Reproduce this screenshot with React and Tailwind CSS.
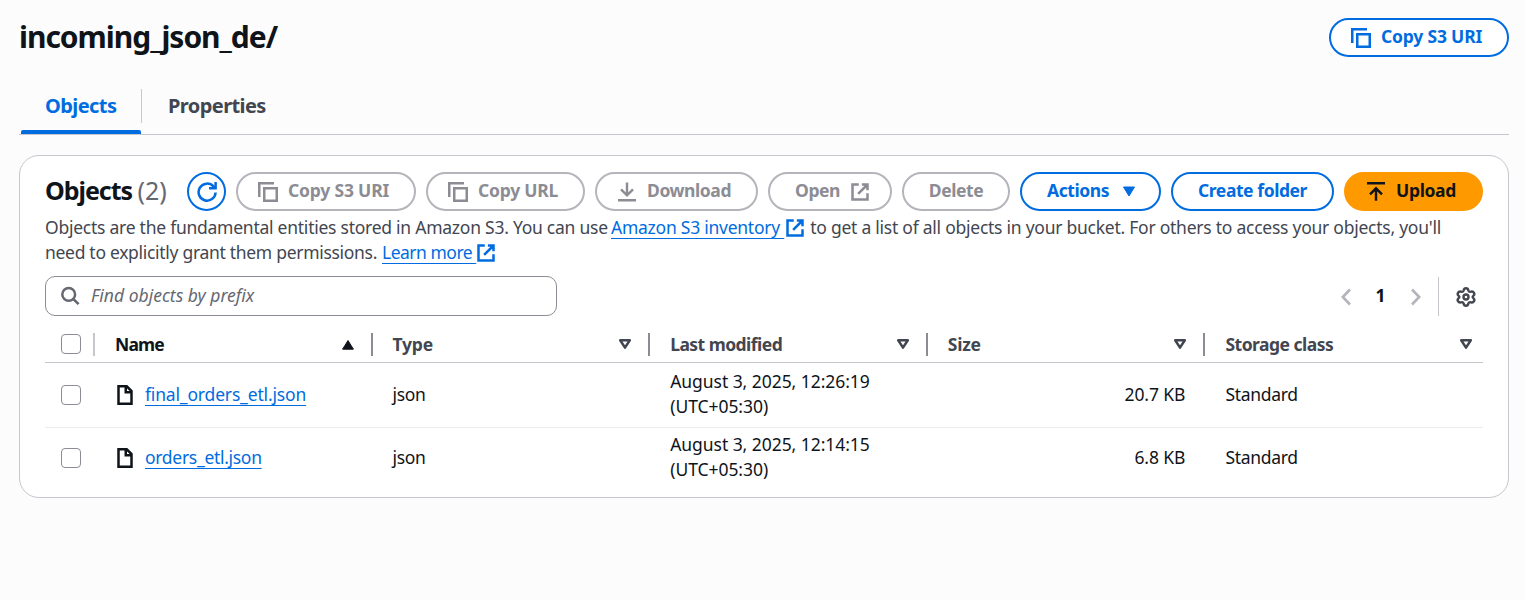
const iconBase = "shrink-0 fill-none stroke-current stroke-2";

function CopyIcon() {
  return (
    <svg viewBox="0 0 20 20" className="h-5 w-5 shrink-0 fill-none stroke-current">
      <path d="M1.25 15V1.25H16" strokeWidth="2.5" />
      <path d="M6.25 6.25h12.5v12.5H6.25z" strokeWidth="2.5" />
    </svg>
  );
}

function ExternalIcon() {
  return (
    <svg viewBox="0 0 16 16" className={`${iconBase} h-5 w-5`}>
      <path d="M14 9.050V14H2V2h5M9.500 2H14v4.500M6.500 9.500L14 2" />
    </svg>
  );
}

function RefreshIcon() {
  return (
    <svg viewBox="0 0 20 20" className="h-5 w-5 fill-none stroke-current">
      <path d="M18.600 10.500A8.500 8.500 0 1 1 16.400 4.400L18.200 6.200" strokeWidth="2.500" />
      <path d="M18.600 0v6.300h-6.600" strokeWidth="2.500" />
    </svg>
  );
}

function DownloadIcon() {
  return (
    <svg viewBox="0 0 20 20" className="h-5 w-5 shrink-0 fill-none stroke-current">
      <path d="M1 18.200h18M10 0.500v12.500M4 7.300l6 6 6-6" strokeWidth="2.400" />
    </svg>
  );
}

function UploadIcon() {
  return (
    <svg viewBox="0 0 20 20" className="h-5 w-5 shrink-0 fill-none stroke-current">
      <path d="M1 1.300h18M10 18.700V7M4 12.300l6-6 6 6" strokeWidth="2.400" />
    </svg>
  );
}

function FileIcon() {
  return (
    <svg viewBox="0 0 16 16" className="h-5 w-5 shrink-0 fill-none stroke-[#0f141a] stroke-2">
      <path d="M2.800 1h6.600l3.800 3.800V15H2.800z" />
      <path d="M8.600 1v4.700h4.600" />
    </svg>
  );
}

function SearchIcon() {
  return (
    <svg viewBox="0 0 20 20" className="h-5 w-5 fill-none stroke-[#656871]">
      <circle cx="8.700" cy="8.400" r="6.400" strokeWidth="2.500" />
      <path d="M13.200 12.900l5.400 5.200" strokeWidth="2.700" />
    </svg>
  );
}

function GearIcon() {
  return (
    <svg viewBox="0 0 20 20" className="h-5 w-5 fill-none stroke-[#424650]" strokeLinejoin="round">
      <path
        d="M10 1.300c1.500 0 2.100.8 2.400 2.300.5 1.300 1.300 1.500 2.600 1.100 1.500-.4 2.400.1 3 1.200.7 1.200.4 2.100-.7 3-.9.800-.9 1.500 0 2.200 1.100.9 1.400 1.800.7 3-.6 1.100-1.500 1.600-3 1.200-1.300-.4-2.100-.2-2.600 1.100-.3 1.500-.9 2.300-2.400 2.300s-2.100-.8-2.400-2.300C7.100 15.100 6.300 14.900 5 15.300c-1.500.4-2.400-.1-3-1.200-.7-1.200-.4-2.100.7-3 .9-.7.9-1.400 0-2.200-1.100-.9-1.400-1.800-.7-3 .6-1.100 1.500-1.600 3-1.200 1.300.4 2.100.2 2.600-1.100.3-1.500.9-2.300 2.400-2.300z"
        strokeWidth="2.400"
      />
      <circle cx="10" cy="10" r="2.500" strokeWidth="2.400" />
    </svg>
  );
}

function Chevron({ right }) {
  return (
    <svg viewBox="0 0 10 18" className="h-[18px] w-[10px] fill-none stroke-[#b4b4bb]">
      <path d={right ? "M1 1.500L8.200 9 1 16.500" : "M9 1.500L1.800 9 9 16.500"} strokeWidth="2.600" />
    </svg>
  );
}

function SortIcon({ active }) {
  return active ? (
    <svg viewBox="0 0 12 10" className="h-[10px] w-3 overflow-visible fill-[#0f141a] stroke-[#0f141a]" strokeLinejoin="round">
      <path d="M6 0.500l5.400 8.700H0.600z" />
    </svg>
  ) : (
    <svg viewBox="0 0 12 10" className="mb-px h-[10px] w-3 overflow-visible fill-none stroke-[#424650]" strokeLinejoin="round">
      <path d="M1.200 1.200h9.600L6 8.600z" strokeWidth="2.500" />
    </svg>
  );
}

function Button({ className, children }) {
  return (
    <button
      className={`flex h-[39px] shrink-0 items-center rounded-[20px] border-2 text-[17.5px] font-bold whitespace-nowrap ${className}`}
    >
      {children}
    </button>
  );
}

function Label({ children }) {
  return <span className="mb-0.5">{children}</span>;
}

const blue = "border-[#006ce0] bg-white text-[#006ce0]";
const disabled = "border-[#b4b4bb] bg-white text-[#8c8c94]";

function Link({ className = "", children }) {
  return (
    <a
      className={`whitespace-pre text-[#006ce0] underline decoration-1 underline-offset-4 [text-decoration-skip-ink:none] ${className}`}
    >
      {children}
    </a>
  );
}

function Checkbox() {
  return <span className="block h-5 w-5 rounded-[4px] border border-[#8c8c94] bg-white" />;
}

const columns = [
  { name: "Name", spacing: "tracking-[-0.8px]", active: true },
  { name: "Type", spacing: "tracking-[-0.25px]" },
  { name: "Last modified", spacing: "tracking-[-0.54px]" },
  { name: "Size", spacing: "tracking-[-0.25px]" },
  { name: "Storage class", spacing: "tracking-[-0.5px]" },
];

const files = [
  {
    name: "final_orders_etl.json",
    spacing: "tracking-[-0.17px]",
    time: "12:26:19",
    size: "20.7 KB",
    row: "h-[65px] border-b border-[#ebebf0]",
  },
  { name: "orders_etl.json", spacing: "tracking-[-0.3px]", time: "12:14:15", size: "6.8 KB", row: "h-[60px]" },
];

const grid = "grid grid-cols-[50px_repeat(5,minmax(0,1fr))]";

export default function App() {
  return (
    <main className="h-[600px] bg-[#fcfcfd] pt-[18px] pr-4 pl-[19px] font-['Noto_Sans',sans-serif] text-[17.5px] text-[#0f141a]">
      <header className="flex h-[39px] items-center justify-between">
        <h1 className="mb-0.5 text-[30px] leading-[39px] font-bold tracking-[-1.03px]">incoming_json_de/</h1>
        <Button className={`w-[180px] gap-[10px] pl-5 tracking-[-0.19px] ${blue}`}>
          <CopyIcon />
          <Label>Copy S3 URI</Label>
        </Button>
      </header>

      <nav className="mt-8 flex h-[46px] border-b border-[#c6c6cd] text-[20px] leading-[34px] font-bold tracking-[-0.58px]">
        <div className="ml-[2px] flex w-[120px] flex-col justify-between text-[#006ce0]">
          <span className="pl-6">Objects</span>
          <span className="h-1 rounded-t-[2px] bg-[#006ce0]" />
        </div>
        <div className="h-[34px] border-l border-[#c6c6cd] pl-[26px] text-[#424650]">Properties</div>
      </nav>

      <section className="mt-5 h-[343px] rounded-[20px] border border-[#c6c6cd] bg-white px-[25px] pt-4">
        <div className="flex h-[39px] items-center gap-[10px]">
          <h2 className="mb-[3px] w-[132px] text-[25px] leading-[39px] font-bold tracking-[-1.04px] whitespace-nowrap">
            Objects <span className="font-normal tracking-normal text-[#656871]">(2)</span>
          </h2>
          <Button className={`w-[39px] justify-center ${blue}`}>
            <RefreshIcon />
          </Button>
          <Button className={`w-[180px] gap-[10px] pl-5 tracking-[-0.19px] ${disabled}`}>
            <CopyIcon />
            <Label>Copy S3 URI</Label>
          </Button>
          <Button className={`w-[159px] gap-[10px] pl-5 tracking-[-0.24px] ${disabled}`}>
            <CopyIcon />
            <Label>Copy URL</Label>
          </Button>
          <Button className={`w-[163px] gap-[10px] pl-5 tracking-[-0.43px] ${disabled}`}>
            <DownloadIcon />
            <Label>Download</Label>
          </Button>
          <Button className={`w-[124px] gap-[10px] pl-[25px] tracking-[-0.42px] ${disabled}`}>
            <Label>Open</Label>
            <ExternalIcon />
          </Button>
          <Button className={`w-[108px] justify-center tracking-[-0.42px] ${disabled}`}>
            <Label>Delete</Label>
          </Button>
          <Button className={`w-[141px] gap-[13px] pl-[25px] tracking-[-0.44px] ${blue}`}>
            <Label>Actions</Label>
            <svg viewBox="0 0 14 11" className="h-[11px] w-[14px] fill-current stroke-current" strokeLinejoin="round">
              <path d="M1.500 1h11L7 10z" />
            </svg>
          </Button>
          <Button className={`w-[163px] justify-center tracking-[-0.42px] ${blue}`}>
            <Label>Create folder</Label>
          </Button>
          <Button className="w-[139px] gap-[10px] border-[#ff9900] bg-[#ff9900] pl-5 tracking-[-0.33px] text-[#0f141a]">
            <UploadIcon />
            <Label>Upload</Label>
          </Button>
        </div>

        <div className="mt-1 leading-[25px] tracking-[-0.25px] text-[#424650]">
          <p className="flex whitespace-pre">
            <span className="w-[566px]">Objects are the fundamental entities stored in Amazon S3. You can use</span>
            <Link>Amazon S3 inventory </Link>
            <span className="flex w-[26px] items-center pt-px pl-px text-[#006ce0]">
              <ExternalIcon />
            </span>
            <span>to get a list of all objects in your bucket. For others to access your objects, you'll</span>
          </p>
          <p className="flex whitespace-pre">
            <span className="w-[337px] tracking-[-0.3px]">need to explicitly grant them permissions.</span>
            <Link className="tracking-[-0.5px]">Learn more </Link>
            <span className="flex w-[25px] items-center pt-px text-[#006ce0]">
              <ExternalIcon />
            </span>
          </p>
        </div>

        <div className="mt-[11px] flex h-10 items-center justify-between">
          <div className="flex h-10 w-[512px] items-center gap-[11px] rounded-[10px] border border-[#8c8c94] pl-[14px] text-[#656871] italic">
            <SearchIcon />
            <Label>Find objects by prefix</Label>
          </div>
          <div className="flex h-10 items-center pt-px pr-[7px]">
            <Chevron />
            <span className="mb-0.5 w-[60px] pr-px text-center font-bold">1</span>
            <Chevron right />
            <span className="mr-[17px] ml-[17px] h-[39px] w-px bg-[#c6c6cd]" />
            <GearIcon />
          </div>
        </div>

        <div className={`mt-[10px] h-[37px] border-b border-[#c6c6cd] ${grid}`}>
          <div className="mt-[7px] flex h-[23px] items-center border-r-2 border-[#c6c6cd] pb-0.5 pl-4">
            <Checkbox />
          </div>
          {columns.map((c, i) => (
            <div
              key={c.name}
              className={`mt-[7px] flex h-[23px] items-center justify-between pl-5 font-bold ${c.spacing} ${
                i < 4 ? "border-r-2 border-[#8c8c94] pr-[17px]" : "pr-[11px]"
              } ${c.active ? "text-[#0f141a]" : "text-[#424650]"}`}
            >
              {c.name}
              <SortIcon active={c.active} />
            </div>
          ))}
        </div>

        {files.map((f) => (
          <div key={f.name} className={`items-center leading-[25px] ${grid} ${f.row}`}>
            <div className="pl-4">
              <Checkbox />
            </div>
            <div className="flex items-center gap-[10px] pl-5">
              <FileIcon />
              <Link className={`mb-0.5 ${f.spacing}`}>{f.name}</Link>
            </div>
            <div className="pb-0.5 pl-5 tracking-[-0.4px]">json</div>
            <div className="pb-0.5 pl-5 tracking-[-0.05px]">
              August 3, 2025, {f.time}
              <br />
              (UTC+05:30)
            </div>
            <div className="pr-5 pb-0.5 text-right tracking-[-0.08px]">{f.size}</div>
            <div className="pb-0.5 pl-5 tracking-[-0.3px]">Standard</div>
          </div>
        ))}
      </section>
    </main>
  );
}
